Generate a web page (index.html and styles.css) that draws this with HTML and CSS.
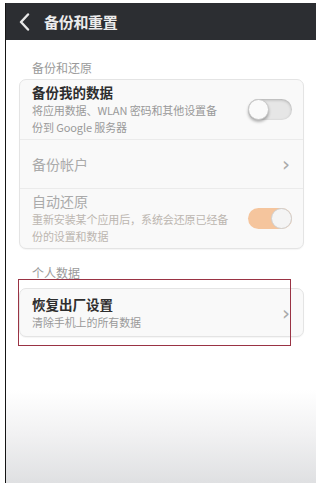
FILE: index.html
```html
<!DOCTYPE html>
<html lang="zh-CN">
<head>
  <meta charset="UTF-8">
  <meta name="viewport" content="width=device-width, initial-scale=1.0">
  <title>备份和重置</title>
  <link rel="stylesheet" href="styles.css">
</head>
<body>
  <div class="phone">
    <div class="topbar">
      <svg class="back" width="12" height="18" viewBox="0 0 12 18">
        <path d="M10 1.5 L3 9 L10 16.5" fill="none" stroke="#e8e8e8" stroke-width="2.4" stroke-linecap="round" stroke-linejoin="round"/>
      </svg>
      <span class="topbar-title">备份和重置</span>
    </div>

    <div class="content">
      <div class="group-label first">备份和还原</div>
      <div class="card">
        <div class="row">
          <div class="row-text">
            <div class="row-title">备份我的数据</div>
            <div class="row-sub">将应用数据、WLAN 密码和其他设置备<br>份到 Google 服务器</div>
          </div>
          <div class="switch off"><span class="knob"></span></div>
        </div>
        <div class="row single">
          <div class="row-text">
            <div class="row-title dim">备份帐户</div>
          </div>
          <span class="chev">›</span>
        </div>
        <div class="row">
          <div class="row-text">
            <div class="row-title dim">自动还原</div>
            <div class="row-sub dim">重新安装某个应用后，系统会还原已经备<br>份的设置和数据</div>
          </div>
          <div class="switch on"><span class="knob"></span></div>
        </div>
      </div>

      <div class="group-label">个人数据</div>
      <div class="reset-wrap">
        <div class="card">
          <div class="row reset">
            <div class="row-text">
              <div class="row-title">恢复出厂设置</div>
              <div class="row-sub">清除手机上的所有数据</div>
            </div>
            <span class="chev">›</span>
          </div>
        </div>
        <div class="highlight"></div>
      </div>
    </div>
  </div>
</body>
</html>
```

FILE: styles.css
```css
body {
  margin: 0;
  padding: 0;
  background: #fff;
  font-family: "Noto Sans CJK SC", "Noto Sans", "Liberation Sans", sans-serif;
}
.phone {
  margin: 3px 0 0 5px;
  height: 480px;
  border-left: 1.5px solid #151515;
  display: flex;
  flex-direction: column;
}
.topbar {
  height: 37px;
  background: #2c2e32;
  display: flex;
  align-items: center;
  padding-left: 12px;
}
.back {
  margin-right: 14px;
}
.topbar-title {
  color: #ececec;
  font-size: 15px;
  font-weight: 700;
  letter-spacing: -0.3px;
}
.content {
  flex: 1;
  padding: 0 12px 0 13px;
  background: linear-gradient(to bottom, #fff 0, #fff 350px, #f1f1f2 395px, #dfe0e2 100%);
}
.group-label {
  font-size: 12px;
  color: #9a9a9a;
  line-height: 16px;
  padding: 16px 0 2px 13px;
}
.group-label.first {
  padding-top: 20px;
  padding-bottom: 3px;
}
.card {
  background: #f9f9f9;
  border: 1px solid #e4e4e4;
  border-radius: 7px;
  box-shadow: 0 1px 1px rgba(0, 0, 0, 0.04);
}
.row {
  display: flex;
  align-items: center;
  height: 59px;
  padding: 0 11px 0 12px;
  border-top: 1px solid #ebebeb;
}
.row:first-child {
  border-top: none;
}
.row.single {
  height: 48px;
}
.row-text {
  flex: 1;
}
.row-title {
  font-size: 13.5px;
  font-weight: 700;
  color: #2e2e2e;
  line-height: 18px;
}
.row-title.dim {
  font-weight: 400;
  color: #aaa;
  font-size: 14px;
}
.row-sub {
  font-size: 11px;
  color: #999;
  line-height: 17px;
  margin-top: 1px;
  letter-spacing: -0.1px;
}
.row-sub.dim {
  color: #bcb6b0;
}
.chev {
  color: #aaa;
  font-size: 20px;
  font-family: "DejaVu Sans", sans-serif;
  line-height: 20px;
  margin-right: 2px;
}
.switch {
  position: relative;
  width: 44px;
  height: 21px;
  border-radius: 11px;
  margin-left: 6px;
}
.switch.off {
  background: #e6e6e6;
  box-shadow: inset 0 1px 3px rgba(0, 0, 0, 0.25);
}
.switch.on {
  background: #f5c59d;
}
.knob {
  position: absolute;
  top: 0;
  width: 21px;
  height: 21px;
  border-radius: 50%;
  box-sizing: border-box;
}
.switch.off .knob {
  left: 0;
  background: #fafafa;
  border: 1px solid #c8c8c8;
  box-shadow: 0 2px 3px rgba(0, 0, 0, 0.3);
}
.switch.on .knob {
  right: 0;
  background: #f4f4f4;
  border: 1.5px solid #cfcfcf;
}
.reset-wrap {
  position: relative;
  margin-top: 5px;
}
.row.reset {
  height: 47px;
}
.highlight {
  position: absolute;
  left: -1px;
  top: -9px;
  width: 271px;
  height: 65px;
  border: 1px solid #9a3344;
}
```
